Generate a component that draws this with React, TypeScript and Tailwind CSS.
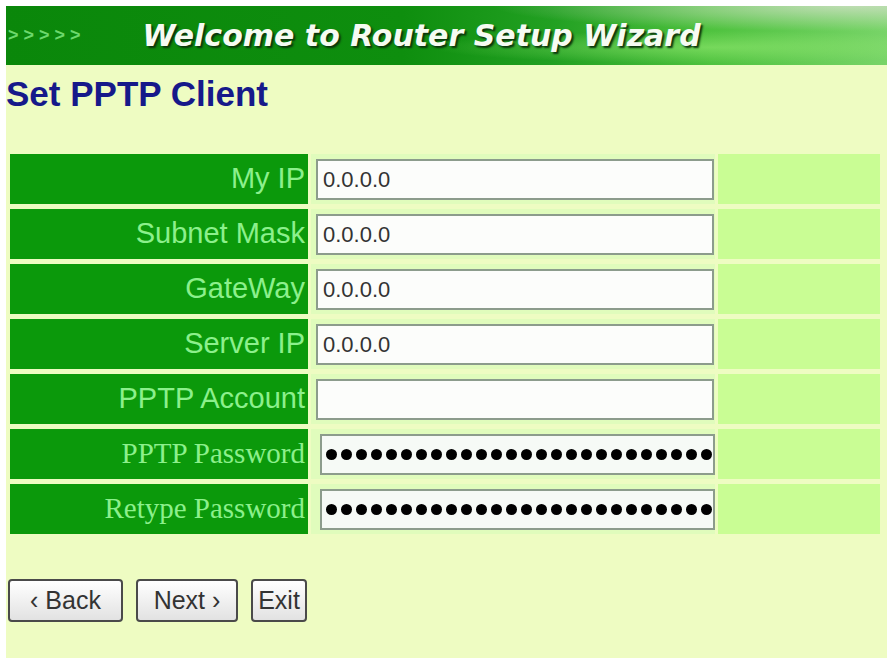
import React from "react";

const fields = [
  { label: "My IP", value: "0.0.0.0" },
  { label: "Subnet Mask", value: "0.0.0.0" },
  { label: "GateWay", value: "0.0.0.0" },
  { label: "Server IP", value: "0.0.0.0" },
  { label: "PPTP Account", value: "" },
];

const passwords = ["PPTP Password", "Retype Password"];

function Dots() {
  return (
    <div className="flex gap-[4px]">
      {Array.from({ length: 26 }).map((_, i) => (
        <span key={i} className="w-[11px] h-[11px] rounded-full bg-black" />
      ))}
    </div>
  );
}

export default function App() {
  return (
    <div className="w-[887px] h-[662px] bg-white pt-[6px] pl-[6px] pb-[4px] flex flex-col font-['Liberation_Sans',Arial,sans-serif]">
      {/* Banner */}
      <div className="h-[59px] shrink-0 flex items-center bg-[radial-gradient(ellipse_at_96%_0%,rgba(215,225,205,0.75),transparent_30%),radial-gradient(ellipse_at_80%_70%,rgba(150,235,115,0.55),transparent_28%),linear-gradient(90deg,#0a870a_0%,#0e8e0e_45%,#22a022_62%,#4fc23f_80%,#78d468_100%)]">
        <span className="ml-[2px] text-[18px] font-bold tracking-[5px] text-[#6cd86c]">
          &gt;&gt;&gt;&gt;&gt;
        </span>
        <span className="ml-[57px] font-['DejaVu_Sans',Verdana,sans-serif] text-[30px] font-bold italic text-[#f6fbf2] [text-shadow:2px_2px_2px_#0b330b]">
          Welcome to Router Setup Wizard
        </span>
      </div>

      {/* Body */}
      <div className="flex-1 bg-[#eefcc2]">
        <h1 className="mt-[9px] text-[35px] leading-[40px] font-bold text-[#16198a]">
          Set PPTP Client
        </h1>

        <div className="mt-[40px] ml-[4px] grid grid-cols-[298px_404px_162px] gap-x-[3px] gap-y-[5px]">
          {fields.map((f) => (
            <React.Fragment key={f.label}>
              <div className="h-[50px] bg-[#0b990b] flex items-center justify-end pr-[3px] text-[29px] text-[#8cf08c]">
                {f.label}
              </div>
              <div className="h-[50px] bg-[#e0fcbc] flex items-center pl-[5px]">
                <div className="w-[398px] h-[41px] bg-[#fcfdfb] border-2 border-[#8c9c8c] flex items-center pl-[5px] text-[22px] text-[#333]">
                  {f.value}
                </div>
              </div>
              <div className="h-[50px] bg-[#c9fd94]" />
            </React.Fragment>
          ))}
          {passwords.map((p) => (
            <React.Fragment key={p}>
              <div className="h-[50px] bg-[#0b990b] flex items-center justify-end pr-[3px] font-['Liberation_Serif','Times_New_Roman',serif] text-[29px] text-[#8cf08c]">
                {p}
              </div>
              <div className="h-[50px] bg-[#e0fcbc] flex items-center pl-[9px]">
                <div className="w-[397px] h-[41px] bg-[#f6faf6] border-2 border-[#8c9c8c] flex items-center pl-[4px]">
                  <Dots />
                </div>
              </div>
              <div className="h-[50px] bg-[#c9fd94]" />
            </React.Fragment>
          ))}
        </div>

        <div className="mt-[45px] ml-[2px] flex gap-[13px]">
          <button className="w-[115px] h-[43px] rounded-[4px] border-2 border-[#4a4a4a] bg-gradient-to-b from-[#ffffff] to-[#e2e2e2] text-[25px] text-[#333]">
            ‹ Back
          </button>
          <button className="w-[102px] h-[43px] rounded-[4px] border-2 border-[#4a4a4a] bg-gradient-to-b from-[#ffffff] to-[#e2e2e2] text-[25px] text-[#333]">
            Next ›
          </button>
          <button className="w-[56px] h-[43px] rounded-[4px] border-2 border-[#4a4a4a] bg-gradient-to-b from-[#ffffff] to-[#e2e2e2] text-[25px] text-[#333]">
            Exit
          </button>
        </div>
      </div>
    </div>
  );
}
